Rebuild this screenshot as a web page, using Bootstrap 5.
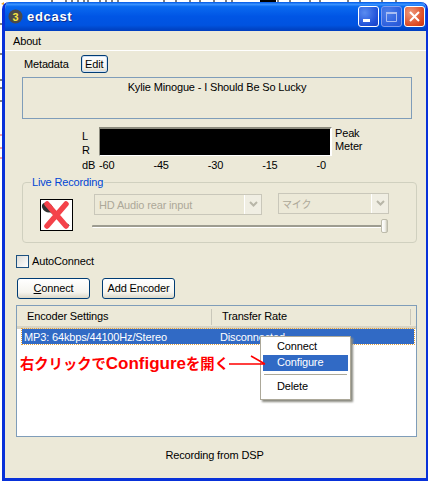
<!DOCTYPE html>
<html lang="en">
<head>
  <meta charset="UTF-8">
  <title>edcast</title>
  <link href="https://cdn.jsdelivr.net/npm/bootstrap@5.3.3/dist/css/bootstrap.min.css" rel="stylesheet">
  <style>
    html, body { height: 481px; overflow: hidden; }
    body {
      background: #fff;
      font-family: "Liberation Sans", Arial, sans-serif;
      font-size: 11px;
      letter-spacing: -.15px;
      line-height: 14px;
      color: #000;
    }
    .bg-scrap { display: block; position: absolute; left: 0; top: 0; }
    .xp-window {
      position: absolute; left: 2px; top: 2px;
      width: 426px; height: 479px;
      background: #ece9d8;
      border-radius: 7px 7px 0 0;
      overflow: hidden;
      border: solid #0831d9;
      border-width: 0 2px 3px 3px;
    }
    .xp-title {
      height: 29px;
      margin: 0 -2px 0 -3px;
      padding: 0 3px 0 6px;
      background: linear-gradient(180deg, #0058e6 0%, #3a93ff 8%, #0a6af0 16%, #0055e5 50%, #0053e0 80%, #0046c8 92%, #003dc0 100%);
    }
    .xp-title-text { color: #fff; font: bold 13px "Liberation Sans", sans-serif; letter-spacing: .7px; text-shadow: 1px 1px 0 #0f2a8a; }
    .xp-caps { gap: 2px; margin-left: auto; }
    .xp-cap {
      width: 21px; height: 21px; border: 1px solid #fff; border-radius: 3px;
      background: radial-gradient(circle at 30% 30%, #5a8cf0, #1f50d8 70%, #1a3fc0);
    }
    .xp-cap svg { display: block; }
    .xp-cap-off { border-color: #7f9cec; background: radial-gradient(circle at 30% 30%, #4f80ea, #2d5fdd 70%, #2a55d0); }
    .xp-cap-close { background: radial-gradient(circle at 30% 30%, #ef9a7c, #dd4a22 70%, #c73510); }
    .xp-menubar { height: 20px; padding-left: 8px; border-bottom: 1px solid #fff; }
    .meta-row { height: 26px; padding-left: 19px; gap: 12px; }
    .xp-btn {
      border: 1px solid #003c74; border-radius: 3px; padding: 0;
      background: linear-gradient(180deg, #fff 0%, #f5f4ee 70%, #dcd8c8 100%);
      color: #000; font: inherit; letter-spacing: inherit; line-height: 1;
    }
    .btn-edit { width: 27px; height: 18px; box-shadow: inset 0 0 0 1px #cfe0f5; }
    .btn-main { width: 73px; height: 21px; }
    .meta-box { height: 42px; margin: 0 14px 0 17px; border: 1px solid #7f9db9; padding-top: 2px; text-align: center; }
    .meter-row { margin-top: 8px; height: 27px; }
    .meter-lr { width: 94px; padding-left: 77px; line-height: 14px; padding-top: 1px; margin-top: 1px; }
    .meter-screen { width: 233px; height: 29px; background: #000; border: 2px solid #fff; border-width: 2px 2px 1px 1px; border-top-color: #8c8b7e; border-left-color: #8c8b7e; }
    .meter-side { padding-left: 3px; line-height: 13px; padding-top: 0; }
    .scale-row { margin-top: 2px; height: 17px; }
    .scale-db { width: 94px; padding-left: 77px; }
    .scale-nums { width: 227px; }
    .live-group {
      position: relative; height: 61px; margin: 9px 9px 0 17px;
      border: 1px solid #d0d0bf; border-radius: 4px;
    }
    .live-label { position: absolute; left: 8px; top: -8px; background: #ece9d8; padding: 0 1px; color: #0046d5; }
    .mic-off { position: absolute; left: 17px; top: 16px; width: 33px; height: 32px; background: #fff; border: 1px solid #000; }
    .xp-select {
      position: absolute; height: 21px; background: #ece9d8;
      border: 1px solid #c9c7ba; color: #aca899; padding: 3px 0 0 4px;
    }
    .sel-one { left: 71px; top: 11px; width: 168px; }
    .sel-two { left: 255px; top: 10px; width: 111px; padding-left: 3px; }
    .sel-jp { font-family: "Noto Sans CJK JP", sans-serif; font-size: 10px; }
    .sel-arrow {
      position: absolute; right: 0; top: 0; bottom: 0; width: 17px;
      background: #f0eee3; border-left: 1px solid #fff;
    }
    .sel-arrow svg { display: block; margin: 6px auto 0; }
    .xp-track { position: absolute; left: 69px; top: 42px; width: 295px; height: 3px; background: #9d9c90; border-bottom: 1px solid #fff; border-radius: 1px; }
    .xp-thumb { position: absolute; left: 358px; top: 36px; width: 7px; height: 14px; background: linear-gradient(90deg, #fff, #f2f1ea 60%, #c8c6b5); border: 1px solid #bdbbab; border-radius: 2px; }
    .auto-row { margin: 11px 0 0 11px; height: 14px; gap: 3px; }
    .xp-check { width: 13px; height: 13px; border: 1px solid #1c5180; background: linear-gradient(135deg, #dcdcd7, #fff); }
    .btn-row { margin: 10px 0 0 12px; gap: 12px; }
    .list-panel {
      position: relative; height: 132px; margin: 6px 9px 0 11px;
      border: 1px solid #7f9db9; background: #fff;
    }
    .list-head { height: 23px; padding-top: 2px; background: #ece9d8; border-bottom: 3px solid #d8d4c4; }
    .head-one { width: 195px; padding-left: 10px; border-right: 1px solid #c9c7ba; height: 16px; }
    .head-two { width: 199px; padding-left: 10px; border-right: 1px solid #c9c7ba; height: 16px; }
    .list-sel { height: 15px; margin: 0 2px 0 5px; background: #316ac5; color: #fff; outline: 1px dotted #e0a040; }
    .sel-name { width: 198px; padding-left: 2px; }
    .ctx-menu {
      position: absolute; left: 243px; top: 30px; width: 91px; height: 64px;
      background: #fff; border: 1px solid #aca899; box-shadow: 2px 2px 2px #8a8a80; padding: 2px;
    }
    .ctx-item { height: 16px; padding-left: 14px; line-height: 15px; }
    .ctx-on { background: #316ac5; color: #fff; }
    .ctx-sep { height: 1px; background: #aca899; margin: 3px 1px 4px 1px; }
    .note-text {
      position: absolute; left: 3px; top: 47px; white-space: nowrap; letter-spacing: 0;
      color: #f00; font: bold 14.3px/20px "Noto Sans CJK JP", sans-serif;
    }
    .note-latin { font: bold 17px/20px "Liberation Sans", sans-serif; }
    .note-arrow { position: absolute; left: 212px; top: 48px; }
    .status-line { margin-top: 11px; text-align: center; padding-right: 2px; }
  </style>
</head>
<body>
<svg class="bg-scrap" width="428" height="160" viewBox="0 0 428 160">
  <path d="M52 0v3M66 0v3M72 0v2M78 0v2M84 0v2M88 0v3M100 0v3M106 0v2M112 0v2M118 0v3M164 0v3M176 0v3M190 0v3M200 0v3M214 0v3M226 0v2M232 0v3M262 0v3M278 0v3M290 0v3M310 0v3M320 0v3M348 0v3M360 0v3M382 0v3M396 0v3" stroke="#000"/>
  <path d="M260 1h16" stroke="#000" stroke-width="2"/>
  <path d="M0 24h2M0 54h2M0 80h2M0 88h2M0 101h2" stroke="#000"/>
  <path d="M0 135h2M0 148h2M0 158h2" stroke="#e44"/>
  <path d="M1 4l3-2v3z" fill="#f0a020"/>
</svg>
<div class="xp-window d-flex flex-column">
  <div class="xp-title d-flex align-items-center">
    <svg width="15" height="15" viewBox="0 0 15 15">
      <circle cx="7.5" cy="7.5" r="7" fill="#4a4a4a"/>
      <text x="7.5" y="11.5" text-anchor="middle" font-family="Liberation Sans" font-weight="bold" font-size="11" fill="#f5e642">3</text>
    </svg>
    <span class="xp-title-text ms-1">edcast</span>
    <div class="xp-caps d-flex">
      <div class="xp-cap">
        <svg width="19" height="19" viewBox="0 0 19 19"><rect x="4" y="12" width="7" height="3" fill="#fff"/></svg>
      </div>
      <div class="xp-cap xp-cap-off">
        <svg width="19" height="19" viewBox="0 0 19 19"><path d="M4.500 5.500h10v9h-10z" fill="none" stroke="#a9bdf2"/><path d="M4 5h11v2H4z" fill="#a9bdf2"/></svg>
      </div>
      <div class="xp-cap xp-cap-close">
        <svg width="19" height="19" viewBox="0 0 19 19"><path d="M5 5l9 9M14 5l-9 9" stroke="#fff" stroke-width="2"/></svg>
      </div>
    </div>
  </div>
  <div class="xp-menubar d-flex align-items-center">About</div>
  <div class="flex-grow-1">
    <div class="meta-row d-flex align-items-center">
      <span>Metadata</span>
      <button class="xp-btn btn-edit">Edit</button>
    </div>
    <div class="meta-box">Kylie Minogue - I Should Be So Lucky</div>
    <div class="meter-row d-flex">
      <div class="meter-lr">L<br>R</div>
      <div class="meter-screen"></div>
      <div class="meter-side">Peak<br>Meter</div>
    </div>
    <div class="scale-row d-flex align-items-center">
      <div class="scale-db">dB</div>
      <div class="scale-nums d-flex justify-content-between">
        <span>-60</span><span>-45</span><span>-30</span><span>-15</span><span>-0</span>
      </div>
    </div>
    <div class="live-group">
      <span class="live-label">Live Recording</span>
      <div class="mic-off">
        <svg width="31" height="30" viewBox="0 0 31 30">
          <path d="M9 11l13 12c2 2 5 0 6 3" stroke="#555" stroke-width="1.6" fill="none"/>
          <ellipse cx="6.500" cy="7.500" rx="6" ry="4.500" fill="#333" transform="rotate(35 6.500 7.500)"/>
          <path d="M6 4l19 22M25 4L6 26" stroke="#f4424a" stroke-width="5.500" stroke-linecap="round"/>
        </svg>
      </div>
      <div class="xp-select sel-one">HD Audio rear input
        <span class="sel-arrow"><svg width="9" height="6" viewBox="0 0 9 6"><path d="M1 1l3.500 3.500L8 1" stroke="#b8b6a8" stroke-width="2" fill="none"/></svg></span>
      </div>
      <div class="xp-select sel-two"><span lang="ja" class="sel-jp">マイク</span>
        <span class="sel-arrow"><svg width="9" height="6" viewBox="0 0 9 6"><path d="M1 1l3.500 3.500L8 1" stroke="#b8b6a8" stroke-width="2" fill="none"/></svg></span>
      </div>
      <div class="xp-track"></div>
      <div class="xp-thumb"></div>
    </div>
    <div class="auto-row d-flex align-items-center">
      <div class="xp-check"></div>
      <span>AutoConnect</span>
    </div>
    <div class="btn-row d-flex">
      <button class="xp-btn btn-main"><u>C</u>onnect</button>
      <button class="xp-btn btn-main">Add Encoder</button>
    </div>
    <div class="list-panel">
      <div class="list-head d-flex align-items-center">
        <div class="head-one">Encoder Settings</div>
        <div class="head-two">Transfer Rate</div>
      </div>
      <div class="list-sel d-flex align-items-center">
        <div class="sel-name">MP3: 64kbps/44100Hz/Stereo</div>
        <div>Disconnected</div>
      </div>
      <div class="note-text" lang="ja">右クリックで<span class="note-latin">Configure</span>を開く</div>
      <div class="ctx-menu">
        <div class="ctx-item">Connect</div>
        <div class="ctx-item ctx-on">Configure</div>
        <div class="ctx-sep"></div>
        <div class="ctx-item">Delete</div>
      </div>
      <svg class="note-arrow" width="38" height="16" viewBox="0 0 38 16">
        <path d="M0 10h36M22 2l14 8" stroke="#f00" stroke-width="1.500" fill="none"/>
      </svg>
    </div>
    <div class="status-line">Recording from DSP</div>
  </div>
</div>
<script src="https://cdn.jsdelivr.net/npm/bootstrap@5.3.3/dist/js/bootstrap.bundle.min.js"></script>
</body>
</html>
